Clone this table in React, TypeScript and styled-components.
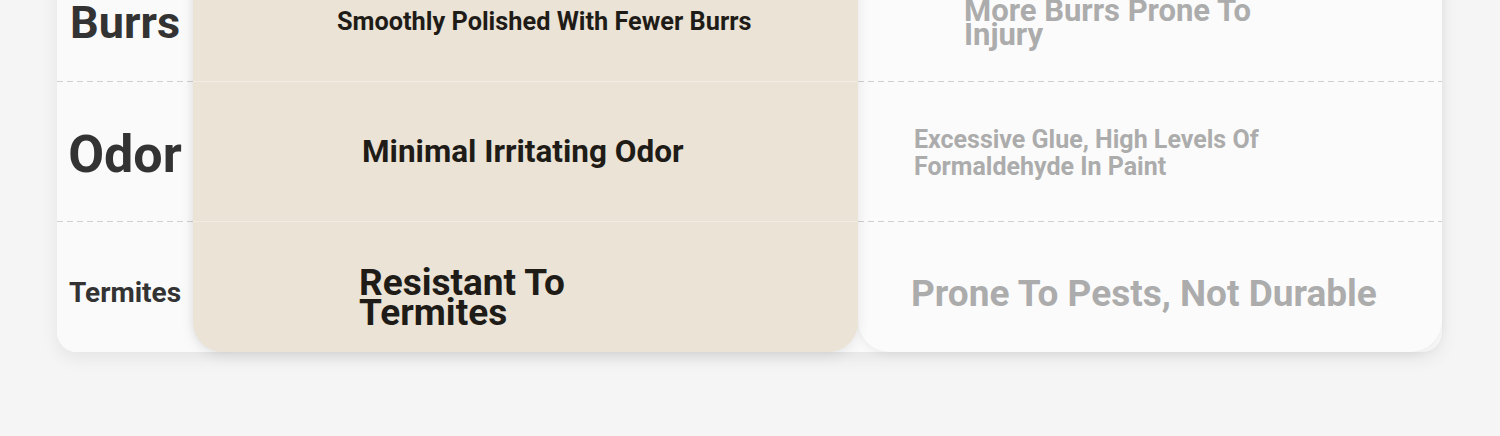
import React from "react";
import styled, { createGlobalStyle } from "styled-components";

const GlobalStyle = createGlobalStyle`
  html, body {
    margin: 0;
    padding: 0;
    background: #f5f5f5;
    font-family: Roboto, "Liberation Sans", Arial, sans-serif;
  }
  #root {
    min-height: 436px;
    overflow: hidden;
  }
`;

const Page = styled.div`
  padding: 0 58px 80px 57px;
  margin-top: -47px;
`;

const Table = styled.div`
  display: grid;
  grid-template-columns: 136px 665px 1fr;
  background: #fafafa;
  border-radius: 0 0 20px 20px;
  box-shadow: 0 6px 18px rgba(0, 0, 0, 0.07);
`;

const Column = styled.div<{ $variant: "label" | "best" | "other" }>`
  display: flex;
  flex-direction: column;
  position: relative;
  ${({ $variant }) =>
    $variant === "best"
      ? `
    background: #eae3d6;
    border-radius: 0 0 30px 30px;
    box-shadow: 0 4px 14px rgba(0, 0, 0, 0.08), -2px 0 6px rgba(0, 0, 0, 0.04);
    z-index: 2;
  `
      : $variant === "other"
      ? `
    background: #fbfbfb;
    border-radius: 0 0 32px 32px;
    box-shadow: 0 3px 10px rgba(0, 0, 0, 0.06);
    z-index: 1;
  `
      : `
    background: #fafafa;
    border-radius: 0 0 0 20px;
  `}
`;

const dashed = `
  border-bottom: 1px solid transparent;
  border-image: repeating-linear-gradient(90deg, #cfcfcf 0 6px, transparent 6px 10px) 0 0 1 0 / 0 0 1px 0;
`;

const Cell = styled.div<{
  $h: number;
  $line: "dashed" | "solid" | "none";
  $align: "center" | "start";
  $pl?: number;
  $pt?: number;
}>`
  box-sizing: border-box;
  height: ${({ $h }) => $h}px;
  display: flex;
  align-items: center;
  justify-content: ${({ $align }) => ($align === "center" ? "center" : "flex-start")};
  padding-left: ${({ $pl }) => $pl ?? 0}px;
  padding-top: ${({ $pt }) => $pt ?? 0}px;
  ${({ $line }) =>
    $line === "dashed"
      ? dashed
      : $line === "solid"
      ? "border-bottom: 1px solid #f2ede4;"
      : ""}
`;

const Label = styled.span<{ $size: number }>`
  font-size: ${({ $size }) => $size}px;
  font-weight: 700;
  color: #333333;
  line-height: 1;
  white-space: nowrap;
`;

const BestText = styled.span<{ $size: number; $lh: number; $max?: number }>`
  font-size: ${({ $size }) => $size}px;
  line-height: ${({ $lh }) => $lh}px;
  font-weight: 700;
  color: #1f1c18;
  max-width: ${({ $max }) => ($max ? `${$max}px` : "none")};
`;

const OtherText = styled.span<{ $size: number; $lh: number; $max?: number }>`
  font-size: ${({ $size }) => $size}px;
  line-height: ${({ $lh }) => $lh}px;
  font-weight: 700;
  color: #acacac;
  max-width: ${({ $max }) => ($max ? `${$max}px` : "none")};
`;

export default function App() {
  return (
    <>
      <GlobalStyle />
      <Page>
        <Table>
          <Column $variant="label">
            <Cell $h={129} $pt={10} $line="dashed" $align="center">
              <Label $size={45}>Burrs</Label>
            </Cell>
            <Cell $h={140} $pt={6} $line="dashed" $align="center">
              <Label $size={52}>Odor</Label>
            </Cell>
            <Cell $h={130} $pt={12} $line="none" $align="center">
              <Label $size={28}>Termites</Label>
            </Cell>
          </Column>
          <Column $variant="best">
            <Cell $h={129} $pt={10} $line="solid" $align="start" $pl={144}>
              <BestText $size={25.3} $lh={30}>Smoothly Polished With Fewer Burrs</BestText>
            </Cell>
            <Cell $h={140} $line="solid" $align="start" $pl={169}>
              <BestText $size={31.5} $lh={38}>Minimal Irritating Odor</BestText>
            </Cell>
            <Cell $h={130} $pt={22} $line="none" $align="start" $pl={166}>
              <BestText $size={37} $lh={30} $max={230}>Resistant To Termites</BestText>
            </Cell>
          </Column>
          <Column $variant="other">
            <Cell $h={129} $pt={12} $line="dashed" $align="start" $pl={106}>
              <OtherText $size={31} $lh={24} $max={310}>More Burrs Prone To Injury</OtherText>
            </Cell>
            <Cell $h={140} $pt={2} $line="dashed" $align="start" $pl={56}>
              <OtherText $size={25} $lh={27} $max={380}>
                Excessive Glue, High Levels Of Formaldehyde In Paint
              </OtherText>
            </Cell>
            <Cell $h={130} $pt={14} $line="none" $align="start" $pl={53}>
              <OtherText $size={37} $lh={44}>Prone To Pests, Not Durable</OtherText>
            </Cell>
          </Column>
        </Table>
      </Page>
    </>
  );
}
